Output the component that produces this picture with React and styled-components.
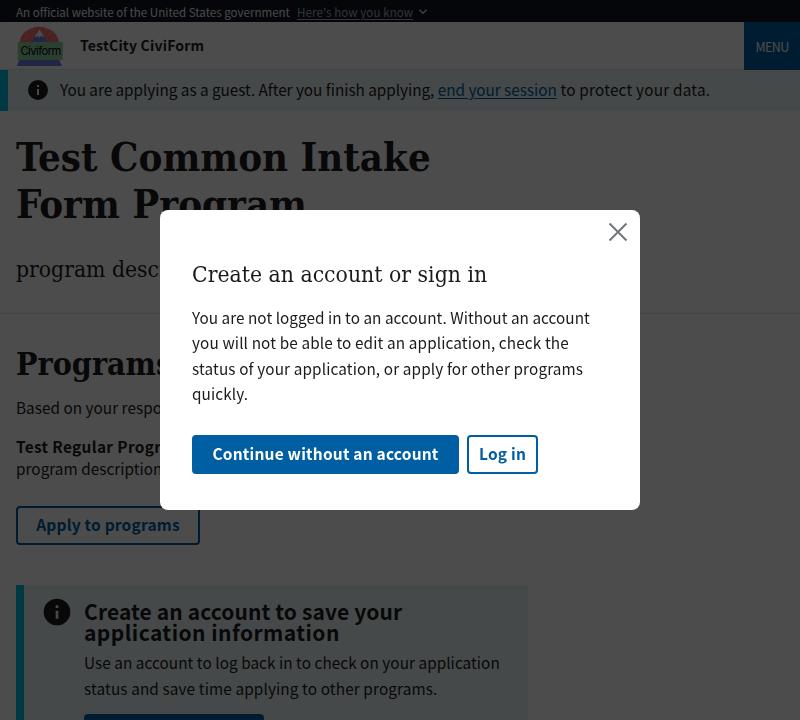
import React from 'react';
import styled, { createGlobalStyle } from 'styled-components';

const sans = '"Noto Sans CJK SC", "Open Sans", sans-serif';
const serif = '"DejaVu Serif Condensed", "DejaVu Serif", serif';

const GlobalStyle = createGlobalStyle`
  * { box-sizing: border-box; }
  html, body { margin: 0; height: 720px; overflow: hidden; background: #fff; }
  body { color: #1b1b1b; font: 400 15.3px/25px ${sans}; letter-spacing: 0.04px; }
  h1, h2, h3, p { margin: 0; }
  button { font-family: inherit; cursor: pointer; }
`;

const Page = styled.div`
  height: 720px;
  overflow: hidden;
`;

const Banner = styled.div`
  display: flex;
  align-items: center;
  height: 22px;
  padding: 1px 16px 0;
  background: #13171f;
  font-size: 11.55px;
  line-height: 20px;
  letter-spacing: 0;
`;

const BannerText = styled.span`
  width: 281px;
  color: #f0f0f0;
`;

const BannerLink = styled.a`
  margin-right: 5px;
  color: #a9aeb1;
  letter-spacing: 0.09px;
  text-decoration: underline;
  text-underline-offset: 2px;
`;

const Header = styled.header`
  display: flex;
  align-items: center;
  height: 48px;
  padding-left: 16px;
  border-bottom: 1px solid #dfe1e2;
`;

const SiteName = styled.span`
  flex: 1;
  margin-left: 16px;
  font-size: 14px;
  font-weight: 700;
  letter-spacing: 0.2px;
`;

const MenuButton = styled.button`
  width: 56px;
  height: 48px;
  margin-bottom: -1px;
  padding: 0;
  border: 0;
  background: #005ea2;
  color: #fff;
  font-size: 12.5px;
  letter-spacing: -0.6px;
`;

const GuestAlert = styled.div`
  display: flex;
  align-items: center;
  height: 41px;
  padding: 0 0 1px 18px;
  border-left: 8px solid #00bde3;
  background: #e7f6f8;
`;

const AlertText = styled.p`
  margin-left: 10px;
  padding-bottom: 2px;
  white-space: pre;
  letter-spacing: -0.02px;
`;

const EndText = styled.span`
  letter-spacing: 0.22px;
`;

const Link = styled.a`
  color: #005ea2;
  text-decoration: underline;
  text-underline-offset: 2px;
`;

const Intro = styled.section`
  height: 203px;
  padding: 23px 16px 0;
  border-bottom: 1px solid #dfe1e2;
`;

const PageTitle = styled.h1`
  width: 480px;
  font: 700 39.8px/47px ${serif};
  letter-spacing: 0;
`;

const Lead = styled.p`
  margin-top: 25px;
  font: 400 22.7px/32px ${serif};
  letter-spacing: 0;
`;

const Results = styled.section`
  padding: 32px 16px 0;
`;

const SectionTitle = styled.h2`
  font: 700 31.9px/36px ${serif};
  letter-spacing: 0;
`;

const Summary = styled.p`
  margin-top: 13px;
`;

const ProgramList = styled.div`
  margin: 15px 0 27px;
  line-height: 22px;
`;

const ProgramName = styled.h3`
  font-size: 15.4px;
  letter-spacing: 0.35px;
`;

const Button = styled.button`
  height: 39px;
  width: ${(p) => p.$width}px;
  padding: 0 0 2px;
  border: 2px solid #005ea2;
  border-radius: 4px;
  background: ${(p) => (p.$filled ? '#005ea2' : 'transparent')};
  color: ${(p) => (p.$filled ? '#fff' : '#005ea2')};
  font-size: 15.5px;
  font-weight: 700;
  line-height: 22px;
  letter-spacing: 0.2px;
  white-space: nowrap;
`;

const ApplyButton = styled(Button)`
  padding-bottom: 4px;
`;

const AccountPanel = styled.aside`
  display: flex;
  width: 512px;
  height: 200px;
  margin-top: 40px;
  padding: 11px 20px 0 17px;
  border-left: 8px solid #00bde3;
  background: #e7f6f8;
`;

const PanelBody = styled.div`
  margin-left: 11px;
  padding-top: 5px;
  line-height: 25.5px;
`;

const PanelTitle = styled.h3`
  width: 360px;
  margin-bottom: 7px;
  font-size: 21px;
  line-height: 21px;
  letter-spacing: 0.1px;
`;

const TitleEnd = styled.span`
  letter-spacing: 0.44px;
`;

const PanelText = styled.p`
  margin-bottom: 13px;
  letter-spacing: 0.06px;
  white-space: nowrap;
`;

const Overlay = styled.div`
  position: fixed;
  inset: 0;
  display: flex;
  align-items: center;
  justify-content: center;
  background: rgba(0, 0, 0, 0.7);
`;

const Modal = styled.div`
  display: flex;
  flex-direction: column;
  width: 480px;
  height: 300px;
  border-radius: 8px;
  background: #fff;
`;

const CloseButton = styled.button`
  display: flex;
  align-self: flex-end;
  align-items: center;
  justify-content: center;
  width: 44px;
  height: 44px;
  padding: 0;
  border: 0;
  background: none;
`;

const ModalBody = styled.div`
  padding: 4px 32px 0;
`;

const ModalTitle = styled.h2`
  font: 400 22.75px/32px ${serif};
  letter-spacing: 0;
`;

const ModalText = styled.p`
  margin: 15px 0 28px;
  line-height: 25.4px;
  white-space: nowrap;
`;

const Wide = styled.span`
  letter-spacing: 0.13px;
`;

const Actions = styled.div`
  display: flex;
  gap: 8px;
`;

function InfoIcon({ size }) {
  return (
    <svg width={size} height={size} viewBox="0 0 24 24" fill="#1b1b1b">
      <path d="M12 2a10 10 0 1 0 0 20 10 10 0 0 0 0-20zm1 15h-2v-6h2v6zm0-8h-2V7h2v2z" />
    </svg>
  );
}

function Logo() {
  return (
    <svg width="48" height="48" viewBox="0 0 48 48">
      <path d="M3.5 21a19.8 17.6 0 0 1 39.5 0z" fill="#fa7272" />
      <path d="M14.5 21 23.5 7.5 32.5 21z" fill="#6b80e0" />
      <path d="m23.5 7.5-4.6 6.9 1.9.6 1.2-1.6 1.5 2.4 1.8-2.4 1.4 1.4 1.5-.4z" fill="#fff" />
      <g fill="#fff" opacity=".75">
        <circle cx="12" cy="13" r=".6" /><circle cx="16" cy="8" r=".6" /><circle cx="9" cy="17" r=".6" />
        <circle cx="30" cy="7" r=".6" /><circle cx="34" cy="11" r=".6" /><circle cx="38" cy="16" r=".6" />
      </g>
      <path d="M3.5 37h39.2l3.3 7H1z" fill="#6b80e0" />
      <rect x="1.7" y="20" width="45" height="18" fill="#8fd4a0" />
      <text x="4.4" y="33.2" fontFamily="Inter, Liberation Sans, sans-serif" fontSize="11.2" textLength="41" fill="#000">Civiform</text>
    </svg>
  );
}

export default function App() {
  return (
    <>
      <GlobalStyle />
      <Page>
        <Banner>
          <BannerText>An official website of the United States government</BannerText>
          <BannerLink>Here's how you know</BannerLink>
          <svg width="10" height="8" viewBox="0 0 10 8" fill="none" stroke="#d0d3d5" strokeWidth="1.6">
            <path d="m1.5 1.7 3.5 3.5 3.5-3.5" />
          </svg>
        </Banner>
        <Header>
          <Logo />
          <SiteName>TestCity CiviForm</SiteName>
          <MenuButton>MENU</MenuButton>
        </Header>
        <GuestAlert>
          <InfoIcon size={24} />
          <AlertText>
            You are applying as a guest. After you finish applying, <Link>end your session</Link>
            <EndText> to protect your data.</EndText>
          </AlertText>
        </GuestAlert>
        <Intro>
          <PageTitle>Test Common Intake Form Program</PageTitle>
          <Lead>program description</Lead>
        </Intro>
        <Results>
          <SectionTitle>Programs</SectionTitle>
          <Summary>Based on your responses</Summary>
          <ProgramList>
            <ProgramName>Test Regular Program</ProgramName>
            <p>program description</p>
          </ProgramList>
          <ApplyButton $width={184}>Apply to programs</ApplyButton>
          <AccountPanel>
            <InfoIcon size={32} />
            <PanelBody>
              <PanelTitle>
                Create an account to save your <TitleEnd>application information</TitleEnd>
              </PanelTitle>
              <PanelText>
                Use an account to log back in to check on your application<br />
                <Wide>status and save time applying to other programs.</Wide>
              </PanelText>
              <Button $filled $width={180} aria-label="Create an account" />
            </PanelBody>
          </AccountPanel>
        </Results>
      </Page>
      <Overlay>
        <Modal role="dialog">
          <CloseButton aria-label="Close">
            <svg width="20" height="20" viewBox="0 0 20 20" fill="none" stroke="#71767a" strokeWidth="2">
              <path d="m1.5 1.5 17 17m0-17-17 17" />
            </svg>
          </CloseButton>
          <ModalBody>
            <ModalTitle>Create an account or sign in</ModalTitle>
            <ModalText>
              You are not logged in to an account. Without an account<br />
              <Wide>you will not be able to edit an application, check the</Wide><br />
              <Wide>status of your application, or apply for other programs</Wide><br />
              <Wide>quickly.</Wide>
            </ModalText>
            <Actions>
              <Button $filled $width={267}>Continue without an account</Button>
              <Button $width={71}>Log in</Button>
            </Actions>
          </ModalBody>
        </Modal>
      </Overlay>
    </>
  );
}
